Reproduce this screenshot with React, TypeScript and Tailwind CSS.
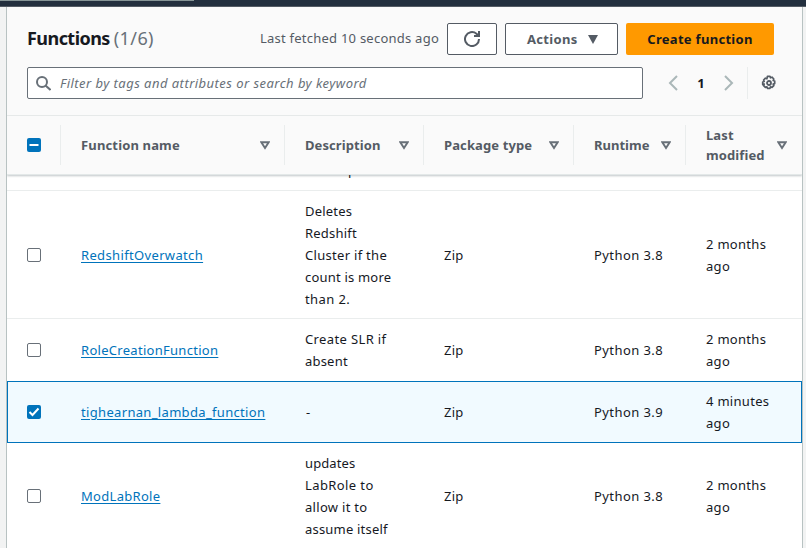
import { ReactNode } from "react";

const columns = "grid grid-cols-[53px_224px_139px_150px_112px_1fr]";

function SortIcon() {
  return (
    <svg width="10" height="9" viewBox="0 0 10 9" className="shrink-0">
      <path d="M1.3 1.2h7.4L5 7z" fill="none" stroke="#687078" strokeWidth="1.9" />
    </svg>
  );
}

function HeaderCell({ children, gap }: { children: ReactNode; gap: string }) {
  return (
    <div className={`my-[9px] flex items-center justify-between border-l border-[#eaeded] pl-5 ${gap}`}>
      <span className="text-[13px] leading-5 font-bold text-[#545b64]">{children}</span>
      <SortIcon />
    </div>
  );
}

function Checkbox({ state }: { state: "on" | "off" | "mixed" }) {
  if (state === "off") return <span className="block size-3.5 rounded-[2px] border border-[#687078] bg-white" />;
  return (
    <svg width="14" height="14" viewBox="0 0 14 14" className="block">
      <rect width="14" height="14" rx="2" fill="#0073bb" />
      <path d={state === "on" ? "M2.5 7l3 3 6-6.500" : "M2.500 7h9"} fill="none" stroke="#fff" strokeWidth="2" />
    </svg>
  );
}

type Row = {
  name: string;
  nameSpacing: string;
  desc: { text: string; spacing: string }[];
  runtime: string;
  modified: string;
  height: string;
  selected?: boolean;
};

const rows: Row[] = [
  {
    name: "RedshiftOverwatch",
    nameSpacing: "tracking-[0.35px]",
    desc: [
      { text: "Deletes", spacing: "tracking-[0.2px]" },
      { text: "Redshift", spacing: "tracking-[0.2px]" },
      { text: "Cluster if the", spacing: "tracking-[0.3px]" },
      { text: "count is more", spacing: "tracking-[0.2px]" },
      { text: "than 2.", spacing: "tracking-[0.4px]" },
    ],
    runtime: "Python 3.8",
    modified: "2 months",
    height: "h-32 border-b border-[#eaeded]",
  },
  {
    name: "RoleCreationFunction",
    nameSpacing: "tracking-[0.29px]",
    desc: [
      { text: "Create SLR if", spacing: "tracking-[0.37px]" },
      { text: "absent", spacing: "tracking-[0.2px]" },
    ],
    runtime: "Python 3.8",
    modified: "2 months",
    height: "h-[62px]",
  },
  {
    name: "tighearnan_lambda_function",
    nameSpacing: "tracking-[0.33px]",
    desc: [{ text: "-", spacing: "pl-px" }],
    runtime: "Python 3.9",
    modified: "4 minutes",
    height: "h-[62px]",
    selected: true,
  },
  {
    name: "ModLabRole",
    nameSpacing: "tracking-[0.3px]",
    desc: [
      { text: "updates", spacing: "tracking-[0.1px]" },
      { text: "LabRole to", spacing: "tracking-[0.4px]" },
      { text: "allow it to", spacing: "tracking-[0.3px]" },
      { text: "assume itself", spacing: "tracking-[0.2px]" },
    ],
    runtime: "Python 3.8",
    modified: "2 months",
    height: "h-[106px]",
  },
];

function TableRow({ row }: { row: Row }) {
  return (
    <div
      className={`${columns} shrink-0 items-center text-[13px] leading-[22px] text-[#16191f] ${row.height} ${
        row.selected ? "bg-[#f1faff] outline-1 -outline-offset-1 outline-[#0073bb]" : ""
      }`}
    >
      <div className="pl-5"><Checkbox state={row.selected ? "on" : "off"} /></div>
      <a className={`pl-[21px] whitespace-nowrap text-[#0073bb] ${row.nameSpacing}`}>
        <span className="underline decoration-1 underline-offset-2">{row.name}</span>
      </a>
      <div className="pl-[21px] whitespace-nowrap">
        {row.desc.map((line) => <div key={line.text} className={line.spacing}>{line.text}</div>)}
      </div>
      <div className="pl-[21px] tracking-[0.2px]">Zip</div>
      <div className="pl-[21px] tracking-[0.42px] whitespace-nowrap">{row.runtime}</div>
      <div className="pl-[21px] tracking-[0.3px]">
        <div>{row.modified}</div>
        <div>ago</div>
      </div>
    </div>
  );
}

export default function App() {
  return (
    <div className="flex h-[548px] w-[806px] flex-col overflow-hidden bg-[#f2f3f3] font-['Noto_Sans',sans-serif]">
      <div className="h-[7px] shrink-0 border-b border-[#545b64] bg-[#232f3e]">
        <div className="h-px w-[194px] bg-[#879596]" />
      </div>
      <main className="mr-[3px] ml-1.5 flex min-h-0 flex-1 flex-col overflow-hidden border-x border-[#b8c2c2] bg-white">
        <header className="relative z-10 h-[109px] shrink-0 border-b border-[#eaeded] bg-[#fafafa] px-5 pt-4">
          <div className="flex h-8 items-center">
            <h1 className="-mt-0.5 flex w-[130px] gap-1 text-[18px] leading-[22px] font-bold whitespace-nowrap text-[#16191f]">
              <span className="tracking-[-0.55px]">Functions</span>
              <span className="font-normal tracking-[0.4px] text-[#687078]">(1/6)</span>
            </h1>
            <div className="mr-2 ml-auto text-[13px] tracking-[0.24px] text-[#545b64]">Last fetched 10 seconds ago</div>
            <button className="mr-2 flex h-8 w-[50px] items-center justify-center rounded-[2px] border border-[#545b64] bg-white">
              <svg width="16" height="16" viewBox="0 0 16 16" fill="none" stroke="#545b64" strokeWidth="2">
                <path d="M15 8a7 7 0 1 1-2.500-5.300L15 5" />
                <path d="M10 5h5V0" />
              </svg>
            </button>
            <button className="mr-2 flex h-8 w-[113px] items-center rounded-[2px] border border-[#545b64] bg-white pl-[21px] text-[13px] font-bold text-[#545b64]">
              <span className="w-[61px] pt-0.5 text-left tracking-[0.32px]">Actions</span>
              <svg width="10" height="9" viewBox="0 0 10 9"><path d="M0 0h10L5 9z" fill="#545b64" /></svg>
            </button>
            <button className="mr-2 h-8 w-[148px] rounded-[2px] bg-[#ff9900] pt-0.5 text-[13px] font-bold tracking-[0.3px] whitespace-nowrap text-[#16191f]">
              Create function
            </button>
          </div>
          <div className="mt-3 flex h-8 items-center">
            <div className="flex h-8 w-[616px] items-center rounded-[2px] border border-[#687078] bg-white pl-2">
              <svg width="15" height="15" viewBox="0 0 15 15" fill="none" stroke="#687078" strokeWidth="2">
                <circle cx="6" cy="6" r="5" />
                <path d="M9.500 9.500l5 4.500" />
              </svg>
              <span className="pt-0.5 pl-[9px] text-[13px] tracking-[0.46px] whitespace-nowrap text-[#687078] italic">
                Filter by tags and attributes or search by keyword
              </span>
            </div>
            <div className="ml-[25px] flex items-center">
              <svg width="10" height="16" viewBox="0 0 10 16" fill="none" stroke="#aab7b8" strokeWidth="2"><path d="M9 1L2 8l7 7" /></svg>
              <span className="w-[46px] pt-0.5 text-center text-[13px] font-bold text-[#16191f]">1</span>
              <svg width="10" height="16" viewBox="0 0 10 16" fill="none" stroke="#aab7b8" strokeWidth="2"><path d="M1 1l7 7-7 7" /></svg>
            </div>
            <div className="ml-[13px] flex h-8 items-center border-l border-[#eaeded] pl-[13px]">
              <svg width="16" height="16" viewBox="0 0 16 16" fill="none" stroke="#545b64" strokeLinejoin="round">
                <path
                  d="M6.700 1h2.600l.5 1.500 1.500-.6 1.800 1.800-.6 1.500 1.500.5v2.600l-1.500.500.6 1.500-1.800 1.800-1.500-.6-.5 1.500H6.700l-.5-1.500-1.500.6-1.800-1.800.6-1.500L2 9.300V6.700l1.500-.5-.6-1.500 1.800-1.800 1.500.6z"
                  transform="translate(-.3 .3)"
                  strokeWidth="1.700"
                />
                <circle cx="8" cy="8" r="2" strokeWidth="1.800" />
              </svg>
            </div>
          </div>
        </header>
        <div className={`${columns} relative z-10 h-[59px] shrink-0 border-b border-[#e3e8e8] bg-[#fafafa] shadow-[0_1px_2px_0_rgba(0,28,36,0.25)]`}>
          <div className="flex items-center pl-5"><Checkbox state="mixed" /></div>
          <HeaderCell gap="pr-3.5 tracking-[0.15px]">Function name</HeaderCell>
          <HeaderCell gap="pr-3.5 tracking-[0.08px]">Description</HeaderCell>
          <HeaderCell gap="pr-3.5 tracking-[0.12px]">Package type</HeaderCell>
          <HeaderCell gap="pr-3.5">Runtime</HeaderCell>
          <HeaderCell gap="pr-[15px] tracking-[0.1px]">Last<br />modified</HeaderCell>
        </div>
        <div className={`${columns} -mt-[46px] h-[62px] shrink-0 content-end border-b border-[#eaeded] pb-[9px] text-[13px] leading-[22px] text-[#16191f]`}>
          <div className="col-start-3 pl-[21px] tracking-[0.2px]">SNS Topic.</div>
        </div>
        {rows.map((row) => <TableRow key={row.name} row={row} />)}
      </main>
    </div>
  );
}
